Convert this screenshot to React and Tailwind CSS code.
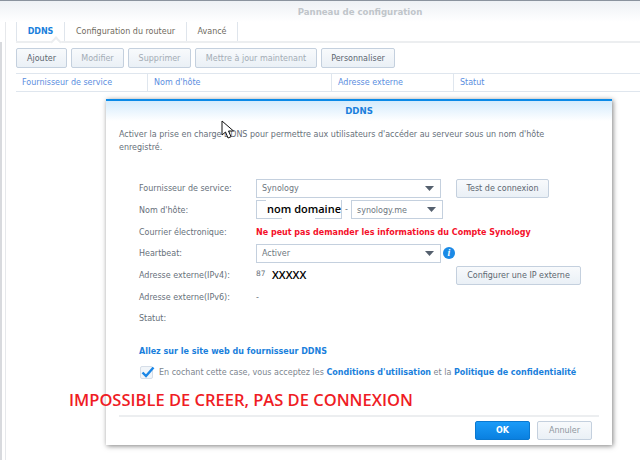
import React from 'react';

const font = { fontFamily: '"DejaVu Sans", sans-serif' };
const open = { fontFamily: '"Open Sans", sans-serif' };

const Caret = () => (
  <svg width="9" height="5" viewBox="0 0 9 5" className="shrink-0">
    <path d="M0 0h9L4.500 5z" fill="#55606e" />
  </svg>
);

const ToolButton = ({ children, disabled, className = '' }) => (
  <div className={`h-[20px] pt-[1px] flex items-center justify-center rounded-[2px] border border-[#c4d0de] bg-gradient-to-b from-[#f8fafc] to-[#eaf0f6] text-[8px] ${disabled ? 'text-[#a3acb5]' : 'text-[#5c6670]'} ${className}`}>
    {children}
  </div>
);

const Select = ({ value, className = '' }) => (
  <div className={`flex items-center justify-between border border-[#c4d0de] bg-white pl-[5px] pr-[6px] text-[8px] text-[#6d7680] ${className}`}>
    <span className="pt-[2px]">{value}</span>
    <Caret />
  </div>
);

const Row = ({ label, height, children }) => (
  <div className="flex items-center" style={{ height }}>
    <div className="w-[117px] pt-[2px] shrink-0 text-[8px] text-[#67707a]">{label}</div>
    {children}
  </div>
);

export default function App() {
  return (
    <div className="relative w-[640px] h-[460px] overflow-hidden bg-white" style={font}>
      {/* title bar */}
      <div className="h-[22px] pl-[80px] border-t border-[#8b939e] bg-gradient-to-b from-[#eef1f5] to-white text-center text-[8.6px] font-bold leading-[22px] text-[#c0c5ca]">
        Panneau de configuration
      </div>

      <div className="flex">
        {/* left edge */}
        <div className="w-[16px] shrink-0 h-[438px] flex">
          <div className="w-[2px] mt-[20px] bg-[#d8dade]" />
          <div className="w-[1px] ml-[3px] bg-[#e6e8eb]" />
        </div>

        <div className="flex-1">
          {/* tabs */}
          <div className="relative flex h-[21px] border-b-2 border-[#eceef0] text-[8px]">
            <div className="w-[49px] border-x border-[#dfe5ec] text-center leading-[19px] font-bold text-[#1a7fdc]">DDNS</div>
            <div className="w-[122px] border-r border-[#dfe5ec] text-center leading-[19px] text-[#6f6a5e]">Configuration du routeur</div>
            <div className="w-[51px] border-r border-[#dfe5ec] text-center leading-[19px] text-[#6f6a5e]">Avancé</div>
            <div className="absolute left-[36px] top-[16px] w-[8px] h-[8px] rotate-45 border-l-2 border-t-2 border-[#eceef0] bg-white" />
          </div>

          {/* toolbar */}
          <div className="flex gap-[4px] mt-[5px] h-[20px]">
            <ToolButton className="w-[51px]">Ajouter</ToolButton>
            <ToolButton disabled className="w-[53px]">Modifier</ToolButton>
            <ToolButton disabled className="w-[63px]">Supprimer</ToolButton>
            <ToolButton disabled className="w-[122px]">Mettre à jour maintenant</ToolButton>
            <ToolButton className="w-[74px]">Personnaliser</ToolButton>
          </div>

          {/* table header */}
          <div className="mt-[5px] flex h-[19px] border-y border-[#dfe6ee] text-[8px] leading-[17px] text-[#5b8ee0]">
            <div className="w-[132px] pl-[6px] border-r border-[#dfe6ee]">Fournisseur de service</div>
            <div className="w-[184px] pl-[6px] border-r border-[#dfe6ee]">Nom d'hôte</div>
            <div className="w-[122px] pl-[6px] border-r border-[#dfe6ee]">Adresse externe</div>
            <div className="pl-[6px]">Statut</div>
          </div>
        </div>
      </div>

      {/* dialog */}
      <div className="absolute left-[106px] top-[99px] w-[506px] h-[346px] flex flex-col bg-white border-t-2 border-[#0a8ae8] shadow-[1px_1px_5px_rgba(0,0,0,0.5)]">
        <div className="h-[20px] bg-gradient-to-b from-[#d4ebfc] to-white text-center text-[8.6px] font-bold leading-[20px] text-[#1a7fdc]">DDNS</div>
        <p className="mt-[7px] ml-[13px] w-[440px] text-[8px] leading-[13px] text-[#67707a]">
          Activer la prise en charge DDNS pour permettre aux utilisateurs d'accéder au serveur sous un nom d'hôte enregistré.
        </p>

        <div className="mt-[24px] pl-[33px]">
          <Row label="Fournisseur de service:" height={20}>
            <Select value="Synology" className="w-[185px] h-[19px]" />
            <ToolButton className="ml-[15px] w-[93px] !h-[19px]">Test de connexion</ToolButton>
          </Row>
          <Row label="Nom d'hôte:" height={23}>
            <div className="relative w-[86px] h-[19px] border border-[#c4d0de] bg-white">
              <span className="absolute right-0 -top-[1px] h-[16px] pl-[1px] bg-white text-[11px] font-semibold leading-[17px] whitespace-nowrap text-black" style={open}>nom domaine</span>
              <span className="absolute left-[25px] -bottom-[1px] w-[33px] h-[1px] bg-white" />
            </div>
            <span className="w-[9px] text-center text-[8px] text-[#67707a]">-</span>
            <Select value="synology.me" className="w-[92px] h-[19px]" />
          </Row>
          <Row label="Courrier électronique:" height={21}>
            <span className="pt-[2px] text-[8px] font-bold text-[#f4102a]">Ne peut pas demander les informations du Compte Synology</span>
          </Row>
          <Row label="Heartbeat:" height={22}>
            <Select value="Activer" className="w-[185px] h-[19px]" />
            <div className="ml-[2px] w-[12px] h-[12px] rounded-full bg-[#1b8ae6] text-center text-[10px] font-bold italic leading-[12px] text-white" style={{ fontFamily: '"Liberation Serif", serif' }}>i</div>
          </Row>
          <Row label="Adresse externe(IPv4):" height={22}>
            <span className="w-[16px] text-[7.5px] text-[#67707a] -translate-y-[1px]">87</span>
            <span className="w-[184px] text-[11px] font-semibold text-black" style={open}>XXXXX</span>
            <ToolButton className="w-[125px] !h-[19px]">Configurer une IP externe</ToolButton>
          </Row>
          <Row label="Adresse externe(IPv6):" height={21}>
            <span className="pt-[2px] text-[8px] text-[#67707a]">-</span>
          </Row>
          <Row label="Statut:" height={21} />

          <div className="mt-[18px] text-[8px] font-bold text-[#1a7fdc]">Allez sur le site web du fournisseur DDNS</div>

          <div className="mt-[8px] flex items-center text-[8px] text-[#7c858e]">
            <div className="relative ml-[1px] w-[13px] h-[13px] rounded-[2px] border border-[#d6dee8] bg-[#f1f5f9]">
              <svg width="14" height="12" viewBox="0 0 14 12" className="absolute left-0 -top-[1px]">
                <path d="M1.500 6.500L5 10L12.500 1.500" fill="none" stroke="#1a86e6" strokeWidth="2.400" />
              </svg>
            </div>
            <span className="ml-[6px]">
              En cochant cette case, vous acceptez les <b className="text-[#1a7fdc]">Conditions d'utilisation</b> et la <b className="text-[#1a7fdc]">Politique de confidentialité</b>
            </span>
          </div>
        </div>

        {/* footer */}
        <div className="mt-auto mx-[13px] h-[30px] border-t-2 border-[#eceef0] flex justify-end gap-[7px] pr-[7px] pt-[4px]">
          <div className="w-[55px] h-[19px] rounded-[2px] border border-[#0a78d0] bg-gradient-to-b from-[#1a9bf8] to-[#0a80e0] text-center text-[8px] font-bold leading-[17px] text-white">OK</div>
          <ToolButton className="w-[55px] !h-[19px] !text-[#8f979f]">Annuler</ToolButton>
        </div>
      </div>

      {/* annotation on top of the capture */}
      <div className="absolute left-[69px] top-[388px] text-[16.5px] font-semibold leading-[24px] whitespace-nowrap text-[#ef1c25]" style={open}>
        IMPOSSIBLE DE CREER, PAS DE CONNEXION
      </div>

      {/* mouse cursor */}
      <svg width="15" height="20" viewBox="0 0 15 20" className="absolute left-[221px] top-[120px]">
        <path d="M1 1v14l3.500-3 2.500 6 3-1.300-2.500-5.700h5z" fill="#fff" stroke="#111" strokeWidth="1" />
      </svg>
    </div>
  );
}
